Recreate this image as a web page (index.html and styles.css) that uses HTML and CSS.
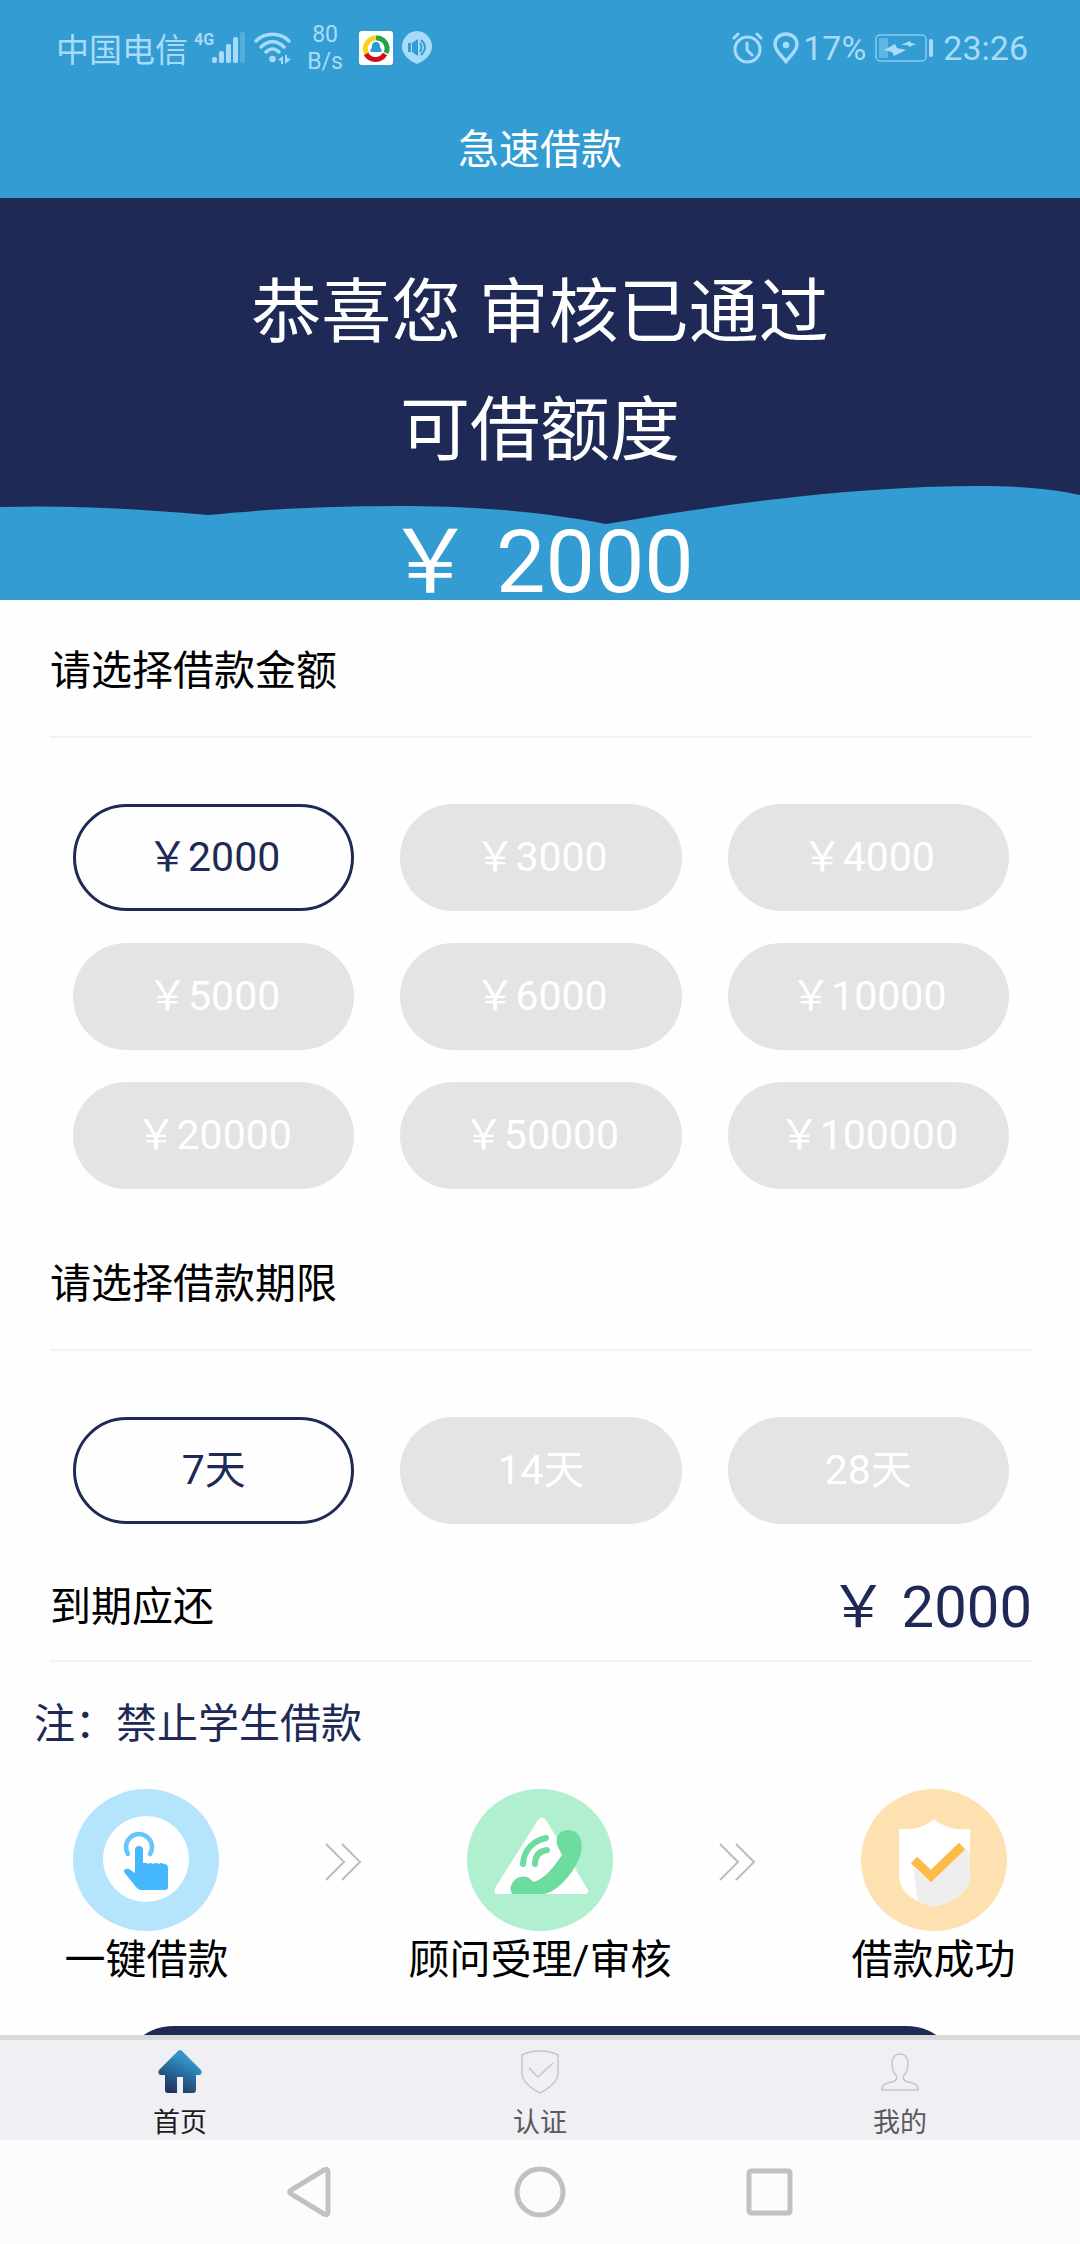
FILE: index.html
```html
<!DOCTYPE html>
<html lang="zh-CN">
<head>
<meta charset="utf-8">
<meta name="viewport" content="width=device-width, initial-scale=1">
<title>急速借款</title>
<link rel="stylesheet" href="styles.css">
</head>
<body>
<div class="app">
  <header class="header">
    <div class="status">
      <span class="carrier">中国电信</span>
      <span class="network">4G</span>
      <svg class="signal" width="34" height="32" viewBox="0 0 34 32" aria-hidden="true">
        <rect x="0" y="25" width="5" height="6" rx="2"/><rect x="7" y="19" width="5" height="12" rx="2"/><rect x="14" y="12" width="5" height="19" rx="2"/><rect x="21" y="5" width="5" height="26" rx="2"/><rect x="28" y="0" width="5" height="31" rx="2" opacity=".3"/>
      </svg>
      <svg class="wifi" width="38" height="32" viewBox="0 0 38 32" aria-hidden="true">
        <g fill="none" stroke="#a7dbf9" stroke-width="3.4" stroke-linecap="round"><path d="M2 9C11 0 26 0 35 9M7 15C14 8 23 8 30 15M12 20C16 16 21 16 25 20"/></g>
        <circle cx="18.500" cy="27" r="3.300"/><path d="M24 28l5-4v8h-2v-3zM31 23v9l6-5-4-1v-3z"/>
      </svg>
      <span class="speed"><span>80</span><span>B/s</span></span>
      <svg class="app-badge" width="34" height="34" viewBox="0 0 34 34" aria-hidden="true">
        <rect width="34" height="34" rx="3" fill="#fff"/>
        <g fill="none" stroke-width="5"><path d="M8 23A10.500 10.500 0 0 1 17 7" stroke="#f6d321"/><path d="M17 7A10.500 10.500 0 0 1 27 22" stroke="#27a243"/><path d="M7 23A11 11 0 0 0 26 23" stroke="#d00d1c"/></g>
        <path d="M17 11c3 0 4 2 4 5l2 4-2 1h-8l-2-1 2-4c0-3 1-5 4-5z" fill="#2b9ad6"/>
      </svg>
      <svg class="volume" width="32" height="34" viewBox="0 0 32 34" aria-hidden="true">
        <path d="M16 0A15.500 15.500 0 0 1 31 16C31 24 23 30 16 33C9 30 1 24 1 16A15.500 15.500 0 0 1 16 0Z"/>
        <path d="M7 12h3v9H7zM11 12l6-4v17l-6-4z" fill="#339cd2"/><path d="M19 12q3 4 0 9M20 9q8 7 0 15" fill="none" stroke="#339cd2" stroke-width="2"/>
      </svg>
      <svg class="alarm" width="31" height="32" viewBox="0 0 31 32" aria-hidden="true">
        <g fill="none" stroke="#a7dbf9" stroke-width="3" stroke-linecap="round" stroke-linejoin="round"><circle cx="15.500" cy="17.500" r="12.500"/><path d="M15 11v7l5 5M2 6l4-4M29 6l-4-4"/></g>
      </svg>
      <svg class="pin" width="26" height="32" viewBox="0 0 26 32" aria-hidden="true">
        <path d="M13 2C6 2 2 7 2 12.500C2 19 9 24 13 29.500C17 24 24 19 24 12.500C24 7 20 2 13 2Z" fill="none" stroke="#a7dbf9" stroke-width="3.400"/><circle cx="13" cy="13" r="3.300"/>
      </svg>
      <span class="clock">17%</span>
      <svg class="battery" width="60" height="28" viewBox="0 0 60 28" aria-hidden="true">
        <rect x="1" y="1" width="50" height="26" rx="4" fill="none" stroke="#a7dbf9" stroke-opacity=".75" stroke-width="1.500"/><rect x="4" y="4" width="9" height="20" opacity=".4"/><rect x="54" y="5" width="4" height="18" rx="2"/>
        <path d="M9 16l11-6 2 4 9 2-12 6-2-4zM26 11l9-4 1 2 5 1-7 3-1-2z"/>
      </svg>
      <span class="clock">23:26</span>
    </div>
    <h1 class="title">急速借款</h1>
  </header>

  <main class="content">
    <section class="hero">
      <svg class="wave" viewBox="0 0 1080 402" preserveAspectRatio="none" aria-hidden="true">
        <path d="M0 309C70 307 140 311 208 317C290 309 350 308 410 308C490 309 550 315 606 326C720 307 850 288 980 288C1020 288 1055 291 1080 297V402H0Z" fill="#339cd2"/>
      </svg>
      <p class="hero-line">恭喜您 审核已通过</p>
      <p class="hero-line">可借额度</p>
      <p class="hero-amount">￥ 2000</p>
    </section>

    <h2 class="section-title">请选择借款金额</h2>
    <div class="options">
      <button type="button" class="option selected" aria-pressed="true">￥2000</button>
      <button type="button" class="option">￥3000</button>
      <button type="button" class="option">￥4000</button>
      <button type="button" class="option">￥5000</button>
      <button type="button" class="option">￥6000</button>
      <button type="button" class="option">￥10000</button>
      <button type="button" class="option">￥20000</button>
      <button type="button" class="option">￥50000</button>
      <button type="button" class="option">￥100000</button>
    </div>

    <h2 class="section-title">请选择借款期限</h2>
    <div class="options">
      <button type="button" class="option selected" aria-pressed="true">7天</button>
      <button type="button" class="option">14天</button>
      <button type="button" class="option">28天</button>
    </div>

    <div class="repay">
      <span>到期应还</span>
      <span class="repay-amount">￥ 2000</span>
    </div>
    <p class="note">注：禁止学生借款</p>

    <div class="steps">
      <div class="step">
        <svg width="146" height="142" viewBox="0 0 146 142" aria-hidden="true">
          <ellipse cx="73" cy="71" rx="73" ry="71" fill="#b5e4fd"/><circle cx="73" cy="70" r="43" fill="#fff"/>
          <path d="M55 65A13 13 0 1 1 77 65" fill="none" stroke="#68c4fc" stroke-width="4.500" stroke-linecap="round"/>
          <path d="M62 61a4 4 0 0 1 8 0V74q3-1 5 1q3-2 5 0q3-2 6 0q2-2 5 0q4 0 4 4V98q0 3-3 3H68q-3 0-5-3L51 83q0-4 5-3L62 84Z" fill="#45b8fd"/>
        </svg>
        <span>一键借款</span>
      </div>
      <svg class="chevron" width="38" height="40" viewBox="0 0 38 40" aria-hidden="true"><path d="M2 2L20 20L2 38M18 2L36 20L18 38"/></svg>
      <div class="step">
        <svg width="146" height="142" viewBox="0 0 146 142" aria-hidden="true">
          <ellipse cx="73" cy="71" rx="73" ry="71" fill="#b0efcf"/>
          <path d="M71 31Q75 26 79 31L121 101Q122 105 118 105H31Q26 105 28 99Z" fill="#fff"/>
          <path d="M91 58C87 48 93 41 101 41C111 41 117 50 114 64C108 84 90 103 77 105H45C41 98 46 90 53 88C60 86 63 90 67 93C78 89 86 79 95 66Z" fill="#6edb9f"/>
          <path d="M56 75C57 61 66 52 79 49M68 75C68 67 72 62 80 61" fill="none" stroke="#6edb9f" stroke-width="6" stroke-linecap="round"/>
        </svg>
        <span>顾问受理/审核</span>
      </div>
      <svg class="chevron" width="38" height="40" viewBox="0 0 38 40" aria-hidden="true"><path d="M2 2L20 20L2 38M18 2L36 20L18 38"/></svg>
      <div class="step">
        <svg width="146" height="142" viewBox="0 0 146 142" aria-hidden="true">
          <ellipse cx="73" cy="71" rx="73" ry="71" fill="#fee1b1"/>
          <path d="M38 40Q60 42 73 30Q86 42 109 40V86C109 102 95 112 73 118C51 112 38 102 38 86Z" fill="#fff"/>
          <path d="M52 78L70 93L104 59L109 64V86C109 102 95 112 73 118Q64 116 57 112Z" fill="#eeeeef"/>
          <path d="M53 71L70 87L101 57" fill="none" stroke="#fdbc49" stroke-width="9"/>
        </svg>
        <span>借款成功</span>
      </div>
    </div>
    <button type="button" class="apply" aria-label="立即借款"></button>
  </main>

  <nav class="tabs">
    <a class="tab active" href="#home">
      <svg width="44" height="44" viewBox="0 0 44 44" aria-hidden="true">
        <defs><linearGradient id="home-fill" x1="0.200" y1="1" x2="0.600" y2="0.200"><stop offset="0" stop-color="#1e2a55"/><stop offset="1" stop-color="#3193c8"/></linearGradient></defs>
        <path d="M20 1Q22-1 24 1L43 20Q45 25 40 25H38V40Q38 43 35 43H25V27H19V43H10Q7 43 7 40V25H4Q-1 25 1 20Z" fill="url(#home-fill)"/>
      </svg>
      <span>首页</span>
    </a>
    <a class="tab" href="#verify">
      <svg width="44" height="44" viewBox="0 0 44 44" aria-hidden="true"><path d="M22 1Q33 1 40 5V24Q39 34 22 43Q5 34 4 24V5Q11 1 22 1ZM11 18L20 27L35 13" fill="none" stroke="#c6c6c8" stroke-width="1.500"/></svg>
      <span>认证</span>
    </a>
    <a class="tab" href="#mine">
      <svg width="44" height="44" viewBox="0 0 44 44" aria-hidden="true"><path d="M22 4C16 4 14 9 14 14C14 20 16 23 18 25C20 28 18 31 14 32C8 33 4 34 4 40H40C40 34 36 33 30 32C26 31 24 28 26 25C28 23 30 20 30 14C30 9 28 4 22 4Z" fill="none" stroke="#c6c6c8" stroke-width="1.500"/></svg>
      <span>我的</span>
    </a>
  </nav>
  <div class="system-nav">
    <button type="button" aria-label="返回"><svg width="52" height="52" viewBox="0 0 52 52"><path d="M39 4Q43 2 43 6V46Q43 50 39 48L6 28Q3 26 6 24Z"/></svg></button>
    <button type="button" aria-label="主屏幕"><svg width="52" height="52" viewBox="0 0 52 52"><circle cx="26" cy="26" r="23"/></svg></button>
    <button type="button" aria-label="最近任务"><svg width="52" height="52" viewBox="0 0 52 52"><rect x="6" y="5" width="41" height="42" rx="2"/></svg></button>
  </div>
</div>
</body>
</html>
```
FILE: styles.css
```css
* {
  box-sizing: border-box;
}

body,
h1,
h2,
p {
  margin: 0;
  font-weight: 400;
}

body {
  font-family: Roboto, "Noto Sans CJK SC", sans-serif;
  font-size: 41px;
  color: #000;
  background: #fefefe;
}

button {
  padding: 0;
  border: 0;
  background: none;
  font: inherit;
}

svg {
  display: block;
  flex: none;
}

.app {
  display: flex;
  flex-direction: column;
  height: 100vh;
}

/* Status bar and title */
.header {
  flex: none;
  background: #339cd2;
  color: #fff;
}

.status {
  display: flex;
  align-items: center;
  height: 98px;
  padding: 0 52px 2px 56px;
  color: #a7dbf9;
  fill: #a7dbf9;
}

.carrier {
  font-size: 33px;
}

.network {
  align-self: flex-start;
  margin: 31px 0 0 6px;
  font-size: 16px;
  font-weight: 700;
  line-height: 18px;
}

.signal {
  margin-left: -2px;
}

.wifi {
  margin-left: 8px;
}

.speed {
  display: flex;
  flex-direction: column;
  width: 36px;
  margin-left: 15px;
  text-align: center;
  font-size: 23px;
  line-height: 27px;
}

.app-badge {
  margin-left: 16px;
}

.volume {
  margin-left: 8px;
}

.alarm {
  margin-left: auto;
}

.pin {
  margin: 0 4px 0 10px;
}

.clock {
  font-size: 34px;
}

.battery {
  margin: 0 8px 0 9px;
}

.title {
  padding-top: 4px;
  font-size: 41px;
  line-height: 96px;
  text-align: center;
}

/* Scrolling content */
.content {
  flex: 1;
  min-height: 0;
  overflow-y: auto;
  scrollbar-width: none;
}

.hero {
  position: relative;
  padding-top: 56px;
  background: #1e2a55;
  color: #fff;
  text-align: center;
}

.wave {
  position: absolute;
  inset: 0;
  width: 100%;
  height: 100%;
}

.hero-line,
.hero-amount {
  position: relative;
}

.hero-line {
  font-size: 70px;
  line-height: 118px;
}

.hero-amount {
  padding-top: 34px;
  font-size: 88px;
  line-height: 76px;
}

.section-title {
  margin: 0 48px 0 50px;
  padding: 41px 0 35px;
  border-bottom: 2px solid #f2f2f2;
  font-size: 41px;
  line-height: 60px;
}

.options {
  display: grid;
  grid-template-columns: repeat(3, 1fr);
  gap: 32px 46px;
  padding: 66px 71px 24px 73px;
}

.option {
  height: 107px;
  padding-bottom: 10px;
  border-radius: 54px;
  background: #e4e4e4;
  color: #fff;
}

.option.selected {
  border: 3px solid #1e2a55;
  background: #fefefe;
  color: #1e2a55;
}

.repay {
  display: flex;
  justify-content: space-between;
  align-items: center;
  margin: 0 48px 0 50px;
  padding: 29px 0 23px;
  border-bottom: 2px solid #f2f2f2;
  line-height: 60px;
}

.repay-amount {
  font-size: 58px;
  color: #1e2a55;
}

.note {
  padding: 32px 34px 35px;
  line-height: 60px;
  color: #1e2a55;
}

.steps {
  display: grid;
  grid-template-columns: repeat(5, 1fr);
  padding: 0 48px;
}

.step {
  display: flex;
  flex-direction: column;
  align-items: center;
  min-width: 0;
  line-height: 58px;
  white-space: nowrap;
}

.chevron {
  margin: 53px auto 0;
  fill: none;
  stroke: #bdbdbd;
  stroke-width: 2;
}

.apply {
  display: block;
  width: calc(100% - 240px);
  height: 107px;
  margin: 37px auto;
  border-radius: 54px;
  background: #1e2a55;
}

/* Bottom tabs */
.tabs {
  display: flex;
  flex: none;
  height: 105px;
  border-top: 5px solid #d9d9d9;
  background: #efeff4;
}

.tab {
  display: flex;
  flex: 1;
  flex-direction: column;
  align-items: center;
  gap: 9px;
  padding-top: 10px;
  color: #5a5a5e;
  font-size: 27px;
  line-height: 40px;
  text-decoration: none;
}

.tab.active {
  color: #1c1c1e;
}

.system-nav {
  display: flex;
  flex: none;
  justify-content: center;
  align-items: center;
  gap: 177px;
  height: 104px;
  background: #fcfcfc;
  fill: none;
  stroke: #c1c1c1;
  stroke-width: 5;
}
```
